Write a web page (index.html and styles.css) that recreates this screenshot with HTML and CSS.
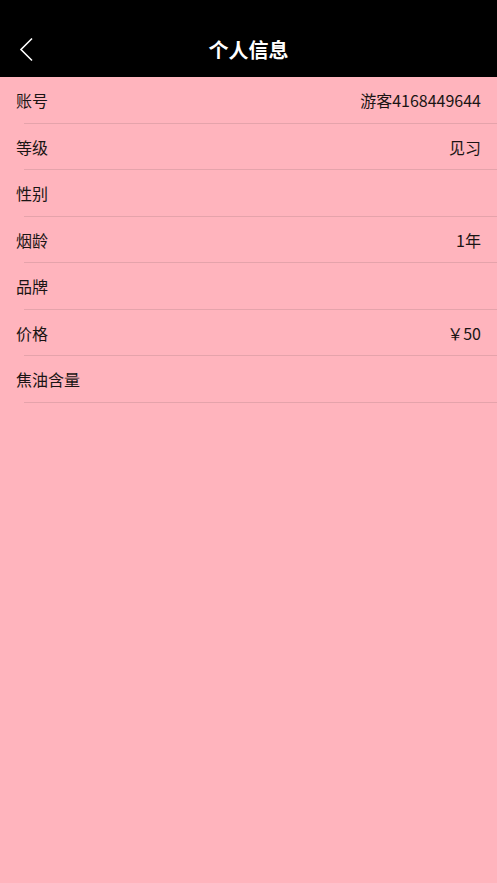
FILE: index.html
```html
<!DOCTYPE html>
<html lang="zh-CN">
<head>
<meta charset="utf-8">
<title>个人信息</title>
<link rel="stylesheet" href="styles.css">
</head>
<body>
<div class="page">
  <header class="nav">
    <div class="back">
      <svg width="16" height="26" viewBox="0 0 16 26"><polyline points="13,1.5 2,12.5 13,23.5" fill="none" stroke="#fff" stroke-width="1.6"/></svg>
    </div>
    <h1 class="title">个人信息</h1>
  </header>
  <ul class="list">
    <li class="row"><span class="label">账号</span><span class="value">游客4168449644</span></li>
    <li class="row"><span class="label">等级</span><span class="value">见习</span></li>
    <li class="row"><span class="label">性别</span><span class="value"></span></li>
    <li class="row"><span class="label">烟龄</span><span class="value">1年</span></li>
    <li class="row"><span class="label">品牌</span><span class="value"></span></li>
    <li class="row"><span class="label">价格</span><span class="value">￥50</span></li>
    <li class="row"><span class="label">焦油含量</span><span class="value"></span></li>
  </ul>
</div>
</body>
</html>
```
FILE: styles.css
```css
html, body {
  margin: 0;
  padding: 0;
  background: #ffb4bd;
  font-family: "Noto Sans CJK SC", "Noto Sans", sans-serif;
}
.page {
  width: 497px;
  min-height: 883px;
  background: #ffb4bd;
}
.nav {
  height: 77px;
  background: #000;
  position: relative;
  display: flex;
  align-items: flex-end;
  justify-content: center;
  box-sizing: border-box;
  padding-bottom: 13px;
}
.back {
  position: absolute;
  left: 19px;
  top: 37px;
  width: 16px;
  height: 26px;
}
.back svg { display: block; }
.title {
  margin: 0;
  color: #fff;
  font-size: 20px;
  font-weight: 700;
  line-height: 28px;
}
.list {
  list-style: none;
  margin: 0;
  padding: 0;
}
.row {
  height: 46.5px;
  box-sizing: border-box;
  padding: 0 16px;
  display: flex;
  align-items: center;
  justify-content: space-between;
  position: relative;
  font-size: 16px;
  color: #1a1414;
}
.row::after {
  content: "";
  position: absolute;
  left: 24px;
  right: 0;
  bottom: 0;
  height: 1px;
  background: #e5a3ab;
}
.label, .value {
  line-height: 22px;
}
```
